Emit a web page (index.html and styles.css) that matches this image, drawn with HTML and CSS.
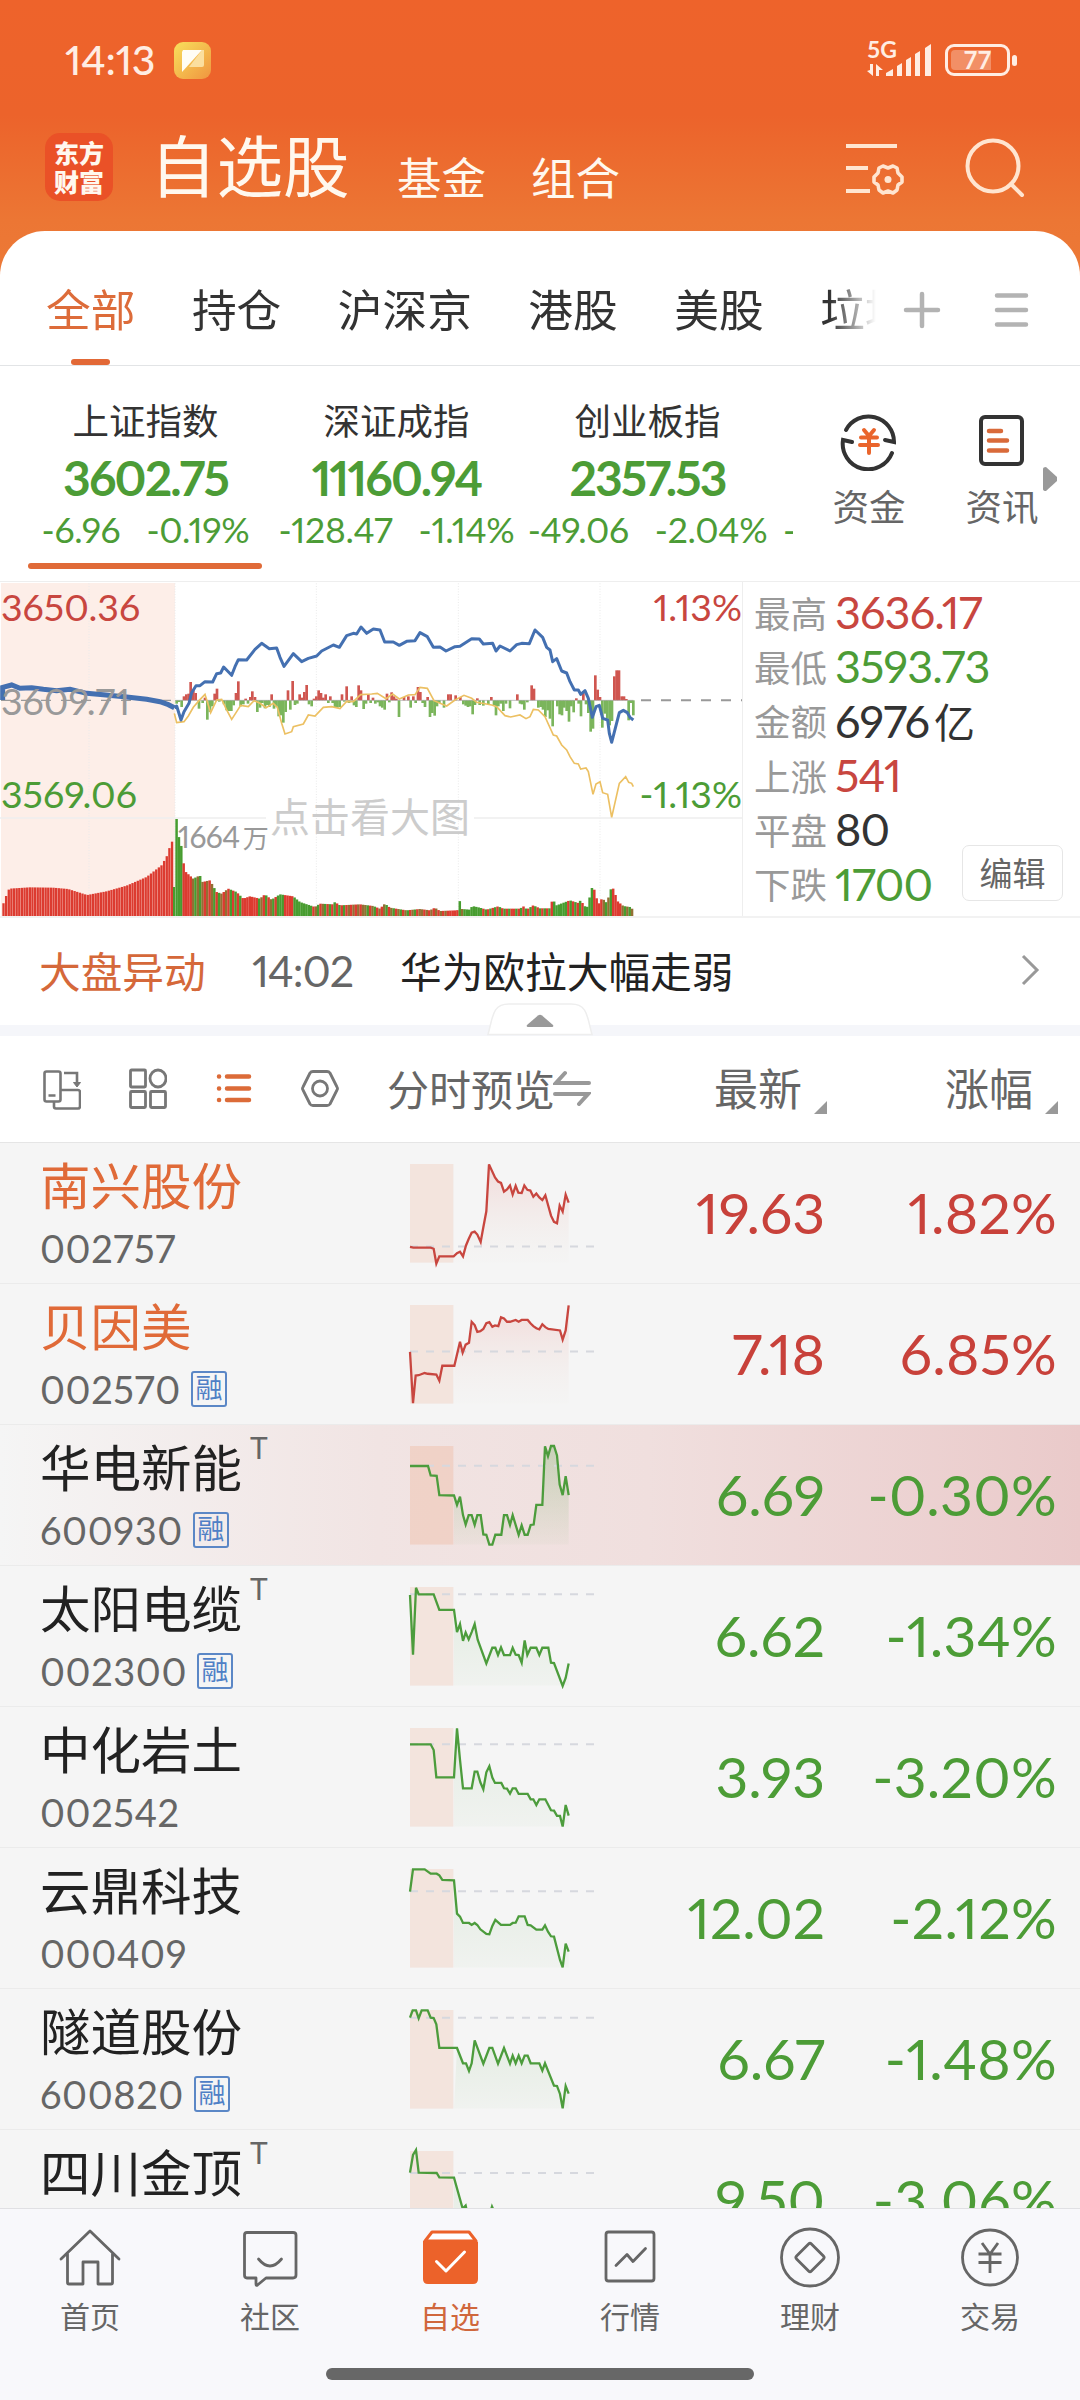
FILE: index.html
```html
<!DOCTYPE html>
<html lang="zh-CN">
<head>
<meta charset="utf-8">
<title>自选股</title>
<link rel="stylesheet" href="styles.css">
</head>
<body>
<div class="app">
  <header class="top">
    <div class="status">
      <span class="clock">14:13</span>
      <svg class="note-app" width="37" height="37" viewBox="0 0 37 37">
        <defs><linearGradient id="noteBg" x1="0" y1="0" x2="1" y2="1"><stop offset="0" stop-color="#f8e05c"/><stop offset="1" stop-color="#f0953f"/></linearGradient></defs>
        <rect width="37" height="37" rx="9" fill="url(#noteBg)"/>
        <path d="M28 8h2v15q0 2-2 2H15z" fill="#fbdf9e"/>
        <path d="M9 8H28L8 30V10z" fill="#fffdf5"/>
      </svg>
      <svg class="signal" width="66" height="37" viewBox="0 0 66 37">
        <g fill="#ffede3">
          <path d="M6 25v10M0 31l6 5V24h-3v6z"/><path d="M9 24v12h3v-6h4z"/>
          <path d="M19 36v-3l7-4v7zM30 36V26l5-3v13zM39 36V20l5-3v19zM48 36V14l5-3v25zM58 36V8l6-4v32z"/>
        </g>
      </svg>
      <span class="net">5G</span>
      <div class="battery"><i class="charge"></i><b>77</b></div>
    </div>
    <div class="titlebar">
      <div class="logo"><span>东方</span><span>财富</span></div>
      <h1>自选股</h1>
      <span class="sub">基金</span>
      <span class="sub">组合</span>
      <svg class="settings" width="60" height="56" viewBox="0 0 60 56" fill="none" stroke="#ffe5d0" stroke-width="4">
        <path d="M1 4H52M1 26H23M1 49H25"/>
        <path d="M38 24l5 2 5-2 4 2 1 5 4 4v5l-4 3-1 5-4 3-5-2-5 2-4-3-1-5-4-3v-5l4-4 1-5z" stroke-linejoin="round" stroke-width="3.6"/>
        <circle cx="43" cy="37.500" r="3.500" fill="#ffe5d0" stroke="none"/>
      </svg>
      <svg class="search" width="62" height="62" viewBox="0 0 62 62" fill="none" stroke="#ffe5d0" stroke-width="4" stroke-linecap="round"><circle cx="28" cy="29" r="25.500"/><path d="M46 47L57 58"/></svg>
    </div>
  </header>

  <main class="sheet">
    <nav class="tabs">
      <div class="tablist">
        <span class="on">全部</span><span>持仓</span><span>沪深京</span><span>港股</span><span>美股</span><span>垃圾</span>
      </div>
      <svg width="38" height="38" viewBox="0 0 38 38" stroke="#b3b3b3" stroke-width="4.500" stroke-linecap="round"><path d="M19 3V35M3 19H35"/></svg>
      <svg class="menu" width="36" height="38" viewBox="0 0 36 38" stroke="#b3b3b3" stroke-width="4.500" stroke-linecap="round"><path d="M4 4.500H33M4 19H33M4 33.500H33"/></svg>
    </nav>

    <section class="indices">
      <div class="strip">
        <div class="idx on"><h2>上证指数</h2><b>3602.75</b><p><span>-6.96</span><span>-0.19%</span></p></div>
        <div class="idx two"><h2>深证成指</h2><b>11160.94</b><p><span>-128.47</span><span>-1.14%</span></p></div>
        <div class="idx"><h2>创业板指</h2><b>2357.53</b><p><span>-49.06</span><span>-2.04%</span></p></div>
        <span class="peek">-</span>
      </div>
      <div class="tool first">
        <svg width="60" height="60" viewBox="0 0 60 60" fill="none" stroke="#333" stroke-width="4" stroke-linecap="round">
          <path d="M7 19A25.500 25.500 0 0 1 55 31L46 29"/><path d="M53 42A25.500 25.500 0 0 1 4 29L13 31"/>
          <path d="M25 19l5 6 5-6M22 26.500H38M21 34H39M30 26V42" stroke="#ea652c"/>
        </svg><span>资金</span>
      </div>
      <div class="tool second">
        <svg width="60" height="60" viewBox="0 0 60 60" fill="none" stroke="#333" stroke-width="4" stroke-linecap="round">
          <rect x="9" y="6" width="41" height="47" rx="4"/><path d="M17 20H29M17 29.500H35M17 39.500H35" stroke="#d96a3a" stroke-width="4.500"/>
        </svg><span>资讯</span>
      </div>
      <svg class="more" width="14" height="24" viewBox="0 0 14 24"><path d="M0 2Q0 0 3 0L14 10V14L3 24Q0 24 0 22z" fill="#999"/></svg>
    </section>

    <section class="market">
      <div class="plot">
        <svg id="minute" width="743" height="336" viewBox="0 33 2229 1008"></svg>
        <div class="axis l"><span class="up">3650.36</span><span class="mid">3609.71</span><span class="down">3569.06</span></div>
        <div class="axis r"><span class="up">1.13%</span><span class="down">-1.13%</span></div>
        <span class="volume">1664<i>万</i></span>
        <span class="enlarge">点击看大图</span>
      </div>
      <dl class="facts">
        <div><dt>最高</dt><dd class="up">3636.17</dd></div>
        <div><dt>最低</dt><dd class="down">3593.73</dd></div>
        <div><dt>金额</dt><dd>6976<i>亿</i></dd></div>
        <div><dt>上涨</dt><dd class="up">541</dd></div>
        <div><dt>平盘</dt><dd>80</dd></div>
        <div><dt>下跌</dt><dd class="down">1700</dd></div>
      </dl>
      <button class="edit">编辑</button>
    </section>

    <section class="news">
      <span class="topic">大盘异动</span><time>14:02</time><span class="headline">华为欧拉大幅走弱</span>
      <svg width="22" height="32" viewBox="0 0 22 32" fill="none" stroke="#999" stroke-width="3"><path d="M4 2L18 16L4 30"/></svg>
    </section>
    <div class="band">
      <svg width="106" height="33" viewBox="0 0 106 33"><path d="M1 31.500C6 14 5 1 22 1H84C101 1 100 14 105 31.500z" fill="#fff" stroke="#eeeeee" stroke-width="1.500"/><path d="M40 22L51 12.500Q53 11 55 12.500L66 22Q67 24 65 24H41Q39 24 40 22z" fill="#999"/></svg>
    </div>

    <section class="listhead">
      <svg width="38" height="42" viewBox="0 0 38 42" fill="none" stroke="#777" stroke-width="2.600">
        <rect x="1.500" y="3.500" width="16" height="30" rx="2"/><path d="M5.500 27.500H12.500M21 5H34V16"/><path d="M30.500 14.500H37.500L34 19z" fill="#777" stroke-width="1"/><path d="M11 34V38.500Q11 40.500 13 40.500H35Q37 40.500 37 38V24.500Q37 22 35 22H18"/>
      </svg>
      <svg width="38" height="42" viewBox="0 0 38 42" fill="none" stroke="#777" stroke-width="2.800">
        <rect x="1.500" y="2" width="15" height="17" rx="1"/><ellipse cx="29" cy="10.500" rx="8" ry="8.500"/><rect x="1.500" y="23.500" width="15" height="16" rx="1"/><rect x="21.500" y="23.500" width="15" height="16" rx="1"/>
      </svg>
      <svg width="38" height="42" viewBox="0 0 38 42" stroke="#dc6b38" stroke-width="4.500" stroke-linecap="round"><path d="M12 8.500H34M12 20.500H34M12 32H34M4 8.500h.1M4 20.500h.1M4 32h.1"/></svg>
      <svg width="38" height="42" viewBox="0 0 38 42" fill="none" stroke="#777" stroke-width="2.800" stroke-linejoin="round"><path d="M12 3.500H26Q28 3.500 29 5L36 19Q37 20.500 36 22L29 36Q28 37.500 26 37.500H12Q10 37.500 9 36L2 22Q1 20.500 2 19L9 5Q10 3.500 12 3.500z"/><circle cx="19" cy="20.500" r="7.500"/></svg>
      <span class="preview">分时预览</span>
      <svg class="swap" width="38" height="36" viewBox="0 0 38 36" fill="none" stroke="#999" stroke-width="4" stroke-linecap="round"><path d="M36 13H3L12 3M2 24H35L26 34"/></svg>
      <span class="sort a">最新<i></i></span>
      <span class="sort b">涨幅<i></i></span>
    </section>

    <section class="stocks">
      <article class="hot red"><div class="id"><h3>南兴股份</h3><p>002757</p></div><svg class="spark"></svg><b>19.63</b><b>1.82%</b></article>
      <article class="hot red"><div class="id"><h3>贝因美</h3><p>002570<em>融</em></p></div><svg class="spark"></svg><b>7.18</b><b>6.85%</b></article>
      <article class="flash"><div class="id"><h3>华电新能<sup>T</sup></h3><p>600930<em>融</em></p></div><svg class="spark"></svg><b>6.69</b><b>-0.30%</b></article>
      <article><div class="id"><h3>太阳电缆<sup>T</sup></h3><p>002300<em>融</em></p></div><svg class="spark"></svg><b>6.62</b><b>-1.34%</b></article>
      <article><div class="id"><h3>中化岩土</h3><p>002542</p></div><svg class="spark"></svg><b>3.93</b><b>-3.20%</b></article>
      <article><div class="id"><h3>云鼎科技</h3><p>000409</p></div><svg class="spark"></svg><b>12.02</b><b>-2.12%</b></article>
      <article><div class="id"><h3>隧道股份</h3><p>600820<em>融</em></p></div><svg class="spark"></svg><b>6.67</b><b>-1.48%</b></article>
      <article class="last"><div class="id"><h3>四川金顶<sup>T</sup></h3></div><svg class="spark"></svg><b>9.50</b><b>-3.06%</b></article>
    </section>
  </main>

  <footer class="bottom">
    <nav class="dock">
      <a><svg width="64" height="64" viewBox="0 0 64 64" fill="none" stroke="#666" stroke-width="2.800" stroke-linecap="round" stroke-linejoin="round"><path d="M3 35L32 7L61 35M9.500 30V58.500Q9.500 60 11 60H25V38H40V60H53Q54.500 60 54.500 58.500V30"/></svg>首页</a>
      <a><svg width="64" height="64" viewBox="0 0 64 64" fill="none" stroke="#666" stroke-width="2.800" stroke-linecap="round" stroke-linejoin="round"><path d="M9 8.500H55Q58 8.500 58 11V51Q58 54 55 54H28L19.500 61Q18 62 18 60V54H9Q6.500 54 6.500 51V11Q6.500 8.500 9 8.500z"/><path d="M20.500 35Q32 49 43.500 35"/></svg>社区</a>
      <a class="on"><svg width="64" height="64" viewBox="0 0 64 64" fill="none" stroke-linecap="round" stroke-linejoin="round"><path d="M14 8H51L58 17H7z" fill="#fff" stroke="#ec622a" stroke-width="3"/><path d="M5 17L8 16H57L60 18V55Q60 60 55 60H10Q5 60 5 55z" fill="#ec622a"/><path d="M18.500 37.500L28 47L46.500 28" stroke="#fff" stroke-width="3"/></svg>自选</a>
      <a><svg width="64" height="64" viewBox="0 0 64 64" fill="none" stroke="#666" stroke-width="2.800" stroke-linecap="round" stroke-linejoin="round"><rect x="8" y="8" width="48" height="49" rx="2.500"/><path d="M18 41.500L29 30.500L35 37.500L47.500 24.500"/></svg>行情</a>
      <a><svg width="64" height="64" viewBox="0 0 64 64" fill="none" stroke="#666" stroke-width="2.800"><circle cx="32" cy="33.500" r="28.500"/><rect x="21.500" y="23" width="21" height="21" rx="2" transform="rotate(45 32 33.500)"/></svg>理财</a>
      <a><svg width="64" height="64" viewBox="0 0 64 64" fill="none" stroke="#666" stroke-width="2.800"><circle cx="32" cy="33.500" r="27.500"/><path d="M24 19L32 30L40 19M20.500 30H43.500M20.500 38.500H43.500M32 30V49"/></svg>交易</a>
    </nav>
    <i class="handle"></i>
  </footer>
</div>
<script src="charts.js"></script>
</body>
</html>
```
FILE: styles.css
```css
* { box-sizing: border-box; margin: 0; padding: 0; }
i, em { font-style: normal; }
svg { display: block; flex: none; }
body {
  width: 1080px; height: 2400px; overflow: hidden;
  font-family: Lato, "Noto Sans CJK SC", sans-serif;
  font-feature-settings: "pnum", "lnum";
  color: #333; background: #fff;
}
.app { width: 1080px; height: 2400px; display: flex; flex-direction: column; overflow: hidden;
  background: linear-gradient(#ee632b 0, #ec632b 115px, #ec7634 220px, #ec7a38 290px); }
.up { color: #c8463f; }
.down { color: #4c9c36; }

.top { height: 231px; flex: none; }
.status { height: 120px; display: flex; align-items: flex-start; padding: 42px 65px 0; color: #ffede3; position: relative; }
.clock { font-size: 41px; line-height: 36px; width: 109px; font-weight: 500; letter-spacing: -.2px; }
.signal { margin: -2px 0 0 656px; }
.net { position: absolute; left: 867px; top: 37px; font: 700 23px/24px Lato; }
.battery { width: 65px; height: 32px; margin: 2px 0 0 12px; border: 3px solid #ffede3; border-radius: 9px; position: relative; text-align: center; }
.battery::after { content: ""; position: absolute; right: -10px; top: 8px; width: 5px; height: 11px; border-radius: 3px; background: #ffede3; }
.battery b { position: relative; font: 700 24px/26px Lato; }
.charge { position: absolute; left: 3px; top: 3px; width: 40px; height: 20px; border-radius: 4px 0 0 4px; background: #f28f66; }
.titlebar { display: flex; height: 111px; padding-left: 45px; color: #fff8ee; }
.logo { width: 68px; height: 68px; margin-top: 13px; border-radius: 15px; background: #ea5127; display: flex; flex-direction: column; padding: 5px 9px; gap: 1px; }
.logo span { font: 900 25px/28px "Noto Sans CJK SC"; height: 28px; }
h1 { margin: 10px 0 0 37px; width: 247px; font-size: 66.500px; line-height: 72px; font-weight: 400; white-space: nowrap; }
.sub { font-size: 44.500px; line-height: 60px; margin-top: 28px; width: 134px; }
.settings { margin: 22px 0 0 180px; }
.search { margin: 17px 0 0 60px; }

.sheet { flex: none; height: 1977px; overflow: hidden; background: #fff; border-radius: 45px 45px 0 0; }
.tabs { height: 135px; border-bottom: 1px solid #e2e4e6; display: flex; align-items: center; padding-top: 24px; }
.tablist { display: flex; gap: 56.500px; width: 876px; height: 110px; padding-left: 46px; overflow: hidden; font-size: 44.700px; line-height: 110px; white-space: nowrap; flex: none; margin-right: 27px;
  -webkit-mask-image: linear-gradient(90deg, #000 830px, transparent 876px); mask-image: linear-gradient(90deg, #000 830px, transparent 876px); }
.tablist span { position: relative; }
.tablist .on { color: #dd6c3a; }
.tablist .on::after { content: ""; position: absolute; left: 25px; bottom: 0; width: 39px; height: 6px; border-radius: 3px; background: #e26836; }
.tabs .menu { margin-left: 52px; }

.indices { height: 215px; display: flex; position: relative; }
.strip { display: flex; width: 793px; padding-left: 20px; overflow: hidden; flex: none; }
.idx { width: 251px; flex: none; text-align: center; display: flex; flex-direction: column; align-items: center; padding-top: 31px; position: relative; color: #4c9c36; }
.idx h2 { font-size: 36.500px; line-height: 48px; font-weight: 400; color: #333; white-space: nowrap; }
.idx b { font-size: 48px; line-height: 55px; margin-top: 5px; font-weight: 700; letter-spacing: -1.900px; }
.idx p { display: flex; gap: 26px; font-size: 35.500px; line-height: 40px; margin-top: 5px; white-space: nowrap; letter-spacing: -.3px; }
.idx.on::after { content: ""; position: absolute; left: 8px; top: 197px; width: 234px; height: 6px; border-radius: 3px; background: #e06a38; }
.peek { font-size: 35.500px; line-height: 40px; margin: 144px 0 0 10px; color: #4c9c36; }
.tool { width: 132px; display: flex; flex-direction: column; align-items: center; padding-top: 45px; font-size: 36.500px; line-height: 44px; color: #666; }
.tool span { margin-top: 14px; }
.tool.first { margin-left: 10px; }
.tool.second { padding-left: 2px; }
.more { position: absolute; left: 1043px; top: 101px; }

.market { height: 337px; border-top: 1px solid #eee; border-bottom: 2px solid #f2f2f2; display: flex; position: relative; }
.plot { width: 743px; height: 334px; position: relative; flex: none; overflow: hidden; border-right: 1px solid #eee; }
.plot #minute { position: absolute; left: 0; top: -1px; }
.axis { position: absolute; top: 3px; font-size: 37.500px; line-height: 44px; display: flex; flex-direction: column; height: 330px; }
.axis.l { left: 1px; gap: 49.500px; }
.axis.r { right: 0; gap: 143px; text-align: right; }
.axis .mid { color: #999; }
.volume { position: absolute; left: 178px; top: 237px; font-size: 30px; line-height: 34px; color: #999; letter-spacing: -.5px; }
.volume i { font-size: 26px; margin-left: 3px; }
.enlarge { position: absolute; left: 270px; top: 210px; font-size: 40px; line-height: 50px; color: #ccc; }
.facts { padding: 3px 0 0 11px; font-size: 45px; }
.facts div { display: flex; align-items: center; height: 54.300px; white-space: nowrap; }
.facts dt { width: 81px; font-size: 36.500px; color: #999; }
.facts dd { letter-spacing: -.9px; }
.facts i { font-size: 41px; margin-left: 5px; line-height: 40px; }
.edit { position: absolute; left: 962px; top: 263px; width: 101px; height: 56px; border: 1px solid #e6e6e6; border-radius: 7px; background: #fff; font: 400 33px/48px "Noto Sans CJK SC"; color: #666; padding-bottom: 3px; }

.news { height: 107px; padding: 0 39px 3px; display: flex; align-items: center; font-size: 41.700px; }
.topic { color: #d5683a; width: 213px; }
.news time { color: #666; width: 148px; font-size: 43px; letter-spacing: -1px; }
.headline { flex: 1; color: #222; }
.band { height: 11px; background: #f5f6fa; position: relative; }
.band svg { position: absolute; left: 487px; top: -22px; }
.listhead { height: 107px; border-bottom: 1px solid #e5e5e5; display: flex; align-items: center; padding-left: 43px; gap: 48px; font-size: 42px; color: #666; }
.preview { width: 164px; white-space: nowrap; margin: -4px -46px 0 0; }
.swap { margin-top: -3px; }
.sort { font-size: 44px; position: relative; margin-top: -4px; }
.sort.a { margin-left: 75px; }
.sort.b { margin-left: 95px; }
.sort i { position: absolute; right: -25px; bottom: 5px; border-style: solid; border-width: 0 0 13px 13px; border-color: transparent transparent #999; }

.stocks { background: #f5f5f5; }
.stocks article { height: 141px; border-bottom: 1px solid #ebebeb; display: flex; color: #4c9c36; }
.stocks .red { color: #c8413a; }
.stocks .flash { background: linear-gradient(90deg, #f5f5f5, #f1e4e3 35%, #f0dfde 60%, #eacaca); }
.id { width: 410px; padding: 10px 0 0 40px; color: #222; flex: none; }
.hot .id { color: #e06a38; }
.id h3 { font-size: 50.500px; line-height: 66px; font-weight: 400; display: flex; height: 72px; }
.id sup { font-size: 30px; line-height: 24px; color: #666; margin: 0 0 0 8px; }
.id p { color: #666; font-size: 38px; line-height: 46px; display: flex; align-items: center; letter-spacing: .6px; }
.id em { width: 36px; height: 36px; border: 2px solid #5b87c6; border-radius: 3px; color: #4f80c6; font-size: 27px; line-height: 30px; text-align: center; margin-left: 10px; letter-spacing: 0; }
.spark { width: 184px; height: 98.600px; margin-top: 21px; overflow: visible; }
.stocks b { font-size: 57px; line-height: 139px; font-weight: 400; text-align: right; white-space: nowrap; width: 231px; flex: none; }
.stocks b + b { width: 232px; letter-spacing: .3px; }

.bottom { height: 192px; flex: none; background: #f8f8fb; border-top: 1px solid #e0e0e3; position: relative; }
.dock { display: flex; height: 159px; }
.dock a { width: 180px; padding-top: 15px; font-size: 30px; line-height: 44px; color: #666; display: flex; flex-direction: column; align-items: center; gap: 6px; }
.dock .on { color: #d0673c; }
.handle { display: block; width: 428px; height: 12px; border-radius: 6px; background: #676767; margin-left: 326px; }
```
FILE: charts.js
```js
const RED = '#dc3b30', GREEN = '#479c2f', MIX = '#936f33';

/* Value of a piecewise-linear curve given as flat x,y pairs. */
function at(c, x) {
  for (let i = 2; i < c.length; i += 2) {
    if (x <= c[i]) {
      const t = (x - c[i - 2]) / (c[i] - c[i - 2]);
      return c[i - 1] + t * (c[i + 1] - c[i - 1]);
    }
  }
  return c[c.length - 1];
}
const nums = s => s.trim().split(/[\s,]+/).map(Number);
/* Afternoon samples are stored relative to x = 1020. */
const later = s => nums(s).map((v, i) => i % 2 ? v : v + 1020);

const pre = '8,390 8,352 35,345 60,355 95,353 130,358 170,362 210,358 260,370 310,374 380,381 440,388 480,395 505,404 523,413';
const price = nums('523,413 530,408 543,450 552,425 567,400 575,368 588,347 600,347 615,335 638,336 650,311 662,309 671,291 695,316 705,290 715,269 740,270 765,238 785,220 808,236 830,234 840,262 852,289 880,251 905,275 925,265 950,258 965,243 1000,225 1018,232')
  .concat(later('20,197 40,190 50,192 63,171 80,190 100,177 120,180 134,216 160,216 178,226 200,214 225,212 240,188 262,200 280,232 300,231 318,243 345,230 360,229 395,206 418,207 430,222 458,220 468,243 480,228 510,243 530,224 545,220 568,221 585,180 608,202 620,232 630,240 638,275 650,266 665,303 680,309 690,335 703,360 715,360 722,373 735,362 745,385 757,442 768,410 778,406 788,445 803,450 808,490 815,517 822,490 838,428 850,421 862,428 870,442 880,450'));
const average = nums('523,430 530,458 552,455 565,438 580,412 597,392 615,373 632,428 650,390 665,388 680,420 695,448 710,425 722,406 745,410 762,392 780,400 798,413 820,400 832,412 845,460 855,492 875,485 880,470 910,462 925,435 945,438 970,412 995,410')
  .concat(later('0,416 20,394 40,395 62,374 95,372 112,370 138,386 158,372 178,387 205,375 225,374 240,352 262,355 282,392 320,408 345,390 372,376 395,385 410,397 455,405 470,410 495,437 512,441 540,435 558,446 570,440 580,418 595,420 615,440 640,495 650,498 665,525 680,540 690,560 703,580 715,582 722,597 738,594 745,605 759,673 768,642 780,635 788,668 803,673 815,742 838,640 857,620 866,637 875,640 880,650'));
const flow = nums('530,-10 537,-5 545,-20 552,12 559,18 566,20 572,55 580,30 587,22 597,-25 608,-8 615,8 622,-58 630,-35 637,-18 644,20 651,35 658,-4 672,-12 680,-30 687,-32 694,-32 701,-15 708,22 715,57 722,-18 730,-12 737,5 744,-10 751,10 757,27 765,10 772,-35 780,-22 787,-8 795,-24 802,-14 808,-20 815,18 822,-25 829,-18 836,-48 843,-45 850,-67 857,-35 864,30 871,-28 878,58 885,-14 892,-10 899,18 906,8 913,25 920,46 927,-12 935,-18 942,5 949,12 956,30 963,22 970,8 977,18 985,-8 991,12 998,-8 1005,-20 1012,-22 1019,-20 1026,18 1033,-4 1040,42 1047,-8 1055,12 1062,-15 1069,-20 1076,45 1083,30 1091,-26 1098,-10 1105,18 1112,-8 1119,8 1126,-10 1133,-6 1140,-18 1147,-22 1154,-28 1161,20 1168,-6 1175,24 1182,12 1189,5 1197,-50')
  .concat(later('192,10 205,12 212,-22 220,12 227,-8 234,40 241,25 248,-8 255,-20 263,10 270,-50 277,-38 284,-46 291,-18 298,-8 312,-22 325,18 332,18 347,15 361,10 370,-12 377,-16 384,-20 391,-18 398,-42 405,-14 412,6 419,-14 430,-16 445,-14 454,10 462,-14 468,-45 475,-18 482,-10 490,-32 498,-10 510,-24 532,18 540,-10 546,-12 553,-28 562,-6 575,45 582,35 595,-22 602,-20 609,-28 616,-50 623,-30 630,-55 638,-78 652,-18 659,-42 666,-45 673,-22 680,-32 687,-64 694,-18 701,-36 709,6 716,-10 723,-48 730,28 738,-12 745,-38 752,-94 759,-85 766,75 773,32 780,10 787,-82 795,-40 802,-55 809,-75 816,-62 823,72 830,90 837,90 845,12 852,12 859,4 866,-60 873,-8 880,-45'));
const preVolume = nums('8,33 20,66 28,85 90,89 160,88 205,84 262,66 320,77 380,94 440,120 485,155 500,180 515,226');
const volume = nums('523,294 534,294 537,240 545,210 551,162 558,135 580,115 600,125 608,105 630,110 650,75 665,70 685,85 710,75 730,55 750,62 780,55 795,68 815,52 840,68 880,62 900,45 945,30 960,40 1000,38 1005,45 1020,35')
  .concat(later('60,38 100,33 120,25 135,40 150,28 200,20 240,24 270,20 285,28 300,18 350,20 358,22 361,70 366,24 390,22 397,33 420,28 440,22 475,32 490,25 540,25 553,33 560,22 580,35 600,26 630,26 638,54 650,35 690,50 715,42 722,50 735,32 745,30 752,80 759,92 766,75 775,35 780,48 787,56 803,40 809,82 823,86 830,50 850,33 870,30 880,22'));
/* Colour runs for the volume bars: [right edge, repeating pattern]. */
const runs = [[548, 'g'], [575, 'r'], [605, 'gm'], [640, 'rm'], [660, 'gr'], [690, 'rm'], [725, 'rg'], [768, 'r'], [800, 'mrg'], [830, 'rmg'], [855, 'g'], [880, 'r'], [930, 'g'], [985, 'grm'], [1040, 'rg'], [1090, 'rm'], [1140, 'grm'], [1260, 'rmg'], [1340, 'mr'], [1375, 'r'], [1400, 'gm'], [1440, 'g'], [1540, 'rg'], [1660, 'gr'], [1705, 'g'], [1750, 'rg'], [1782, 'g'], [1805, 'r'], [1838, 'gm'], [1865, 'r'], [1910, 'gm']];
const tone = { r: RED, g: GREEN, m: MIX };

function drawMinute() {
  const svg = document.getElementById('minute');
  let s = '<rect x="3" y="39" width="522" height="1002" fill="#fdeee8"/>';
  for (const x of [267, 525, 949, 1375, 1800]) s += `<path d="M${x} 40V1040" stroke="#eaeaea" stroke-width="3" stroke-dasharray="3 5"/>`;
  s += '<path d="M0 744H798M1422 744H2229" stroke="#eee" stroke-width="5"/>';
  s += '<path d="M3 391H525" stroke="#999" stroke-width="4" stroke-dasharray="30 30"/><path d="M1923 391H2226" stroke="#999" stroke-width="6" stroke-dasharray="30 30"/>';
  for (let i = 0; i < flow.length; i += 2) {
    const h = flow[i + 1];
    s += `<rect x="${flow[i] - 4}" y="${h > 0 ? 391 - h : 391}" width="8" height="${Math.abs(h)}" fill="${h > 0 ? '#cf5650' : '#7bb55c'}"/>`;
  }
  s += '<path d="M525 391H1900" stroke="#999" stroke-width="3" opacity=".6"/>';
  for (let x = 11; x < 520; x += 7.9) {
    const h = at(preVolume, x);
    s += `<rect x="${x - 4}" y="${1041 - h}" width="7" height="${h}" fill="${RED}"/>`;
  }
  s += `<rect x="519" y="951" width="6" height="90" fill="${GREEN}"/>`;
  let n = 0;
  for (let x = 530; x < 1903; x += 7.08) {
    const h = at(volume, x), run = runs.find(r => x <= r[0]);
    s += `<rect x="${x - 4}" y="${1041 - h}" width="7.500" height="${h}" fill="${tone[run[1][n++ % run[1].length]]}"/>`;
  }
  s += `<polyline points="${average}" fill="none" stroke="#ecc063" stroke-width="5"/>`;
  s += `<polyline points="${pre}" fill="none" stroke="#4470b1" stroke-width="15"/>`;
  s += `<polyline points="${price}" fill="none" stroke="#4470b1" stroke-width="9" stroke-linejoin="round"/>`;
  svg.innerHTML = s;
}

/* Each sparkline: top of its frame, frame height, level of the previous close, points. */
const sparks = [
  [66, 271, 293, '90,294 100,296 152,296 161,299 169,340 178,320 221,320 231,311 240,307 249,320 258,290 266,272 275,255 284,252 292,260 302,280 310,240 319,196 327,67 345,103 354,114 363,118 372,142 381,136 390,125 398,150 407,126 415,145 425,146 433,125 442,137 451,139 460,156 469,147 478,158 487,165 496,152 513,208 522,225 531,229 539,180 548,197 557,150 566,172'],
  [454, 271, 582, '90,583 99,724 107,648 116,647 134,641 143,643 169,645 178,662 187,621 223,621 240,555 248,585 257,563 267,558 275,500 284,509 292,528 301,526 310,520 319,504 328,501 337,514 345,510 355,512 363,488 372,491 381,500 390,500 407,495 416,500 425,495 443,495 452,505 460,512 469,518 478,521 487,507 496,515 505,520 540,524 548,549 557,524 566,455'],
  [842, 271, 896, '90,897 144,897 152,923 170,924 178,977 222,978 231,1004 240,981 249,1032 257,1058 266,1032 275,1032 284,1059 292,1032 302,1032 310,1085 319,1086 328,1113 337,1113 346,1086 364,1086 372,1032 381,1032 390,1059 398,1032 416,1086 425,1060 434,1086 443,1086 452,1059 461,1058 469,1004 487,1004 495,843 504,870 513,842 522,842 531,868 539,948 548,977 557,925 566,977'],
  [1230, 271, 1250, '90,1252 99,1416 108,1232 116,1250 161,1250 178,1293 222,1293 231,1354 240,1332 249,1378 257,1355 266,1374 275,1354 284,1332 293,1375 319,1440 337,1397 346,1397 354,1417 363,1396 372,1417 390,1417 398,1397 407,1416 416,1417 425,1438 434,1377 442,1417 452,1397 469,1397 478,1417 487,1397 505,1397 513,1438 522,1439 548,1502 557,1480 566,1440'],
  [84, 296, 133, '90,133 152,133 161,150 169,232 222,232 231,85 240,180 249,265 275,265 284,215 292,215 301,247 310,268 319,217 328,199 337,233 345,249 364,249 372,265 381,266 390,281 398,265 407,265 416,282 443,282 452,298 460,298 469,315 478,298 496,298 513,331 522,332 531,348 540,348 548,380 557,315 566,347'],
  [507, 296, 574, '90,575 99,508 134,508 152,521 170,521 178,526 187,540 222,541 231,641 240,650 249,669 267,669 275,675 284,669 292,675 301,688 319,702 328,703 337,678 346,660 363,675 390,675 398,669 407,668 416,649 434,649 443,675 452,676 469,689 487,689 495,676 504,695 513,709 522,710 540,780 548,802 557,731 566,755'],
  [930, 296, 953, '90,953 98,931 108,931 116,955 125,931 143,931 152,953 161,954 169,973 178,1044 231,1044 249,1090 258,1090 267,1113 275,1090 284,1021 310,1091 328,1044 337,1044 354,1091 372,1044 390,1091 398,1067 407,1090 416,1067 425,1090 434,1067 443,1067 452,1090 478,1090 487,1112 495,1090 522,1157 531,1158 540,1182 548,1225 557,1158 566,1181'],
  [1353, 296, 1419, '90,1418 99,1365 108,1350 116,1418 170,1419 178,1432 222,1433 248,1526 257,1517 262,1540 330,1540 336,1520 345,1540']
];

function drawSparks() {
  document.querySelectorAll('.spark').forEach((svg, i) => {
    const [top, h, base, pts] = sparks[i];
    const red = i < 2, line = red ? '#c8463f' : '#4c9c3c', bottom = top + h;
    const visible = pts.split(' ').filter(p => parseFloat(p) >= 220).join(' ');
    const lastX = pts.split(' ').pop().split(',')[0];
    svg.setAttribute('viewBox', `90 ${top} 552 ${h}`);
    svg.setAttribute('preserveAspectRatio', 'none');
    svg.innerHTML = `<defs><linearGradient id="fade${i}" x1="0" y1="0" x2="0" y2="1">
      <stop offset="0" stop-color="${red ? '#e8706a' : '#50a040'}" stop-opacity="${i === 2 ? 0.25 : red ? 0.2 : 0.1}"/>
      <stop offset="1" stop-color="${red ? '#e0d8c8' : '#50a040'}" stop-opacity=".03"/></linearGradient></defs>
      <rect x="90" y="${top}" width="130" height="${h}" fill="#f0b8a0" fill-opacity="${i === 2 ? 0.4 : 0.27}"/>
      <polygon points="222,${bottom} ${visible} ${lastX},${bottom}" fill="url(#fade${i})"/>
      <path d="M90 ${base}H642" stroke="#d6d8de" stroke-width="2" stroke-dasharray="8 8" vector-effect="non-scaling-stroke"/>
      <polyline points="${pts}" fill="none" stroke="${line}" stroke-width="2.3" vector-effect="non-scaling-stroke"/>`;
  });
}

drawMinute();
drawSparks();
```
